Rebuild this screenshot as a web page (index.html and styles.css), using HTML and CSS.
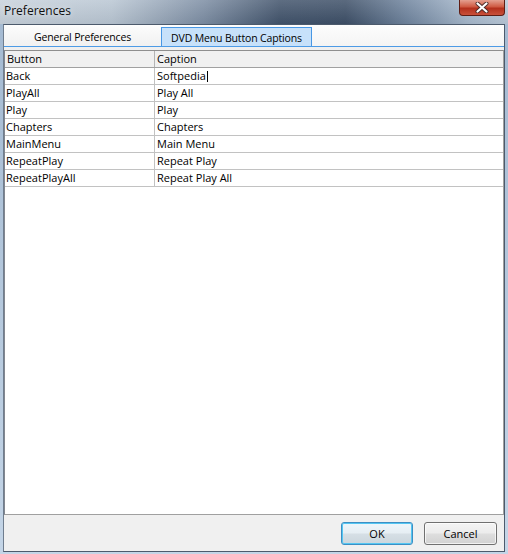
FILE: index.html
```html
<!DOCTYPE html>
<html>
<head>
<meta charset="utf-8">
<link rel="stylesheet" href="styles.css">
</head>
<body>
<div class="window">
  <div class="titlebar">
    <span class="title">Preferences</span>
    <div class="close">
      <svg width="14" height="11" viewBox="0 0 14 11">
        <path d="M2.5 1.5 L11.5 9.5 M11.5 1.5 L2.5 9.5" stroke="#4b2b29" stroke-width="4" stroke-linecap="round"/>
        <path d="M2.5 1.5 L11.5 9.5 M11.5 1.5 L2.5 9.5" stroke="#ffffff" stroke-width="2.2" stroke-linecap="round"/>
      </svg>
    </div>
  </div>
  <div class="client">
    <div class="tabs">
      <div class="tab general">General Preferences</div>
      <div class="tab active">DVD Menu Button Captions</div>
    </div>
    <div class="page">
      <div class="grid">
        <div class="row head"><div class="c1">Button</div><div class="c2">Caption</div></div>
        <div class="row"><div class="c1">Back</div><div class="c2">Softpedia<span class="caret"></span></div></div>
        <div class="row"><div class="c1">PlayAll</div><div class="c2">Play All</div></div>
        <div class="row"><div class="c1">Play</div><div class="c2">Play</div></div>
        <div class="row"><div class="c1">Chapters</div><div class="c2">Chapters</div></div>
        <div class="row"><div class="c1">MainMenu</div><div class="c2">Main Menu</div></div>
        <div class="row"><div class="c1">RepeatPlay</div><div class="c2">Repeat Play</div></div>
        <div class="row"><div class="c1">RepeatPlayAll</div><div class="c2">Repeat Play All</div></div>
      </div>
    </div>
    <div class="footer">
      <button class="btn default">OK</button>
      <button class="btn">Cancel</button>
    </div>
  </div>
</div>
</body>
</html>
```
FILE: styles.css
```css
html, body {
  margin: 0;
  padding: 0;
  background: #ffffff;
}
.window {
  width: 508px;
  height: 554px;
  box-sizing: border-box;
  padding: 0 3px 2px 3px;
  display: flex;
  flex-direction: column;
  background: linear-gradient(180deg, #a3b9d1 0%, #b7cade 60%, #c4d5e7 100%);
  font-family: "Open Sans", "Liberation Sans", sans-serif;
  font-size: 11px;
  color: #000;
}
.titlebar {
  height: 24px;
  margin: 0 -3px;
  display: flex;
  align-items: flex-start;
  background:
    linear-gradient(180deg, rgba(255,255,255,0.15), rgba(0,0,0,0.05)),
    linear-gradient(90deg, #c8d2dc 0%, #b9c6d3 22%, #7d8ea4 40%, #42546c 55%, #3e5068 68%, #6f849e 80%, #a6b8cc 92%, #b9c8d8 100%);
}
.title {
  margin: 3px 0 0 4px;
  font-size: 12px;
  line-height: 16px;
  color: #101010;
  text-shadow: 0 0 6px rgba(255,255,255,0.8);
}
.close {
  margin-left: auto;
  margin-right: 3px;
  width: 46px;
  height: 16px;
  box-sizing: border-box;
  border: 1px solid #5f1d14;
  border-top: none;
  border-radius: 0 0 4px 4px;
  background: linear-gradient(180deg, #e4a090 0%, #cf5a43 45%, #b3301c 55%, #c9503a 100%);
  display: flex;
  align-items: center;
  justify-content: center;
}
.close svg {
  display: block;
  margin-top: -1px;
}
.client {
  flex: 1;
  display: flex;
  flex-direction: column;
  border: 1px solid #4c5a6c;
  border-left-color: #6f7d8e;
  background: #f0f0f0;
}
.tabs {
  height: 21px;
  display: flex;
  align-items: flex-end;
  border-bottom: 1px solid #4d9be6;
  background: linear-gradient(180deg, #fdfdfd 0%, #f4f4f4 100%);
}
.tab {
  height: 19px;
  box-sizing: border-box;
  padding-top: 2px;
  display: flex;
  align-items: center;
  justify-content: center;
  white-space: nowrap;
  line-height: 15px;
  font-size: 10.5px;
  letter-spacing: -0.15px;
}
.general {
  width: 157px;
  background: linear-gradient(180deg, #fbfbfb 0%, #f1f1f1 100%);
}
.active {
  width: 151px;
  border: 1px solid #4897e4;
  border-bottom: none;
  background: #c7e1fa;
}
.page {
  flex: 1;
  display: flex;
  flex-direction: column;
  padding-top: 3px;
}
.grid {
  flex: 1;
  background: #ffffff;
  border: 1px solid #a0a0a0;
  border-left-color: #828790;
  border-top-color: #8e8e8e;
}
.row {
  display: flex;
  height: 16px;
  border-bottom: 1px solid #c2c2c2;
  line-height: 16px;
  white-space: nowrap;
}
.row.head {
  background: #f0f0f0;
  border-bottom-color: #a0a0a0;
}
.c1 {
  width: 150px;
  padding-left: 1px;
  box-sizing: border-box;
  border-right: 1px solid #c2c2c2;
}
.head .c1 {
  padding-left: 2px;
  border-right-color: #b4b4b4;
}
.c2 {
  flex: 1;
  padding-left: 2px;
  display: flex;
  align-items: center;
}
.caret {
  display: inline-block;
  width: 1px;
  height: 11px;
  margin-left: 1px;
  background: #000;
}
.footer {
  height: 36px;
  box-sizing: border-box;
  display: flex;
  justify-content: flex-end;
  align-items: flex-start;
  gap: 11px;
  padding: 7px 7px 0 0;
  background: #f0f0f0;
}
.btn {
  width: 73px;
  height: 23px;
  margin: 0;
  padding: 0;
  font-family: "Open Sans", "Liberation Sans", sans-serif;
  font-size: 11px;
  color: #000;
  border: 1px solid #707070;
  border-radius: 3px;
  background: linear-gradient(180deg, #f4f4f4 0%, #ececec 48%, #dedede 52%, #d2d2d2 100%);
  box-shadow: inset 0 0 0 1px rgba(255,255,255,0.7);
}
.btn.default {
  width: 72px;
  border-color: #3c8fc4;
  box-shadow: inset 0 0 0 1px #54c6f2;
  background: linear-gradient(180deg, #eef6fb 0%, #e6eef3 48%, #d6dfe5 52%, #cbd6dd 100%);
}
```
